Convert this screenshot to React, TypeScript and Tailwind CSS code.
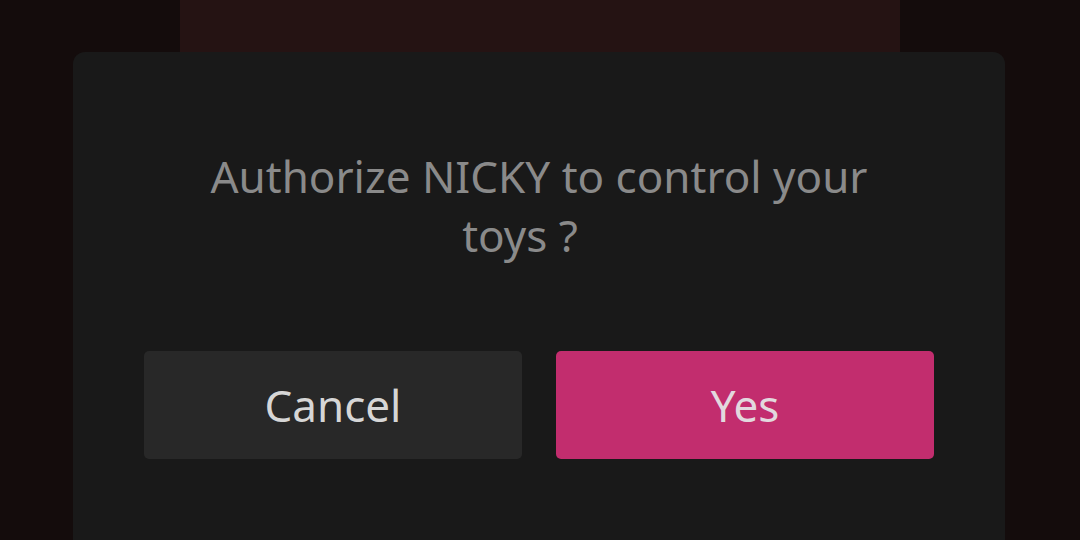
export default function App() {
  return (
    <div
      className="relative w-[1080px] h-[540px] overflow-hidden bg-[#140c0c] flex justify-center"
      style={{ fontFamily: '"Noto Sans", "Open Sans", sans-serif' }}
    >
      <div className="w-[720px] h-full bg-[#251313]" />
      <div className="absolute inset-0">
        <div className="absolute left-[73px] top-[52px] w-[932px] h-[520px] rounded-[12px] bg-[#191919] px-[71px] flex flex-col">
          <p className="mt-[95px] text-center text-[44px] leading-[59px] text-[#8a8a8a]">
            Authorize NICKY to control your
            <br />
            <span className="inline-block pr-[38px]">toys ?</span>
          </p>
          <div className="mt-[86px] flex gap-[34px]">
            <button className="w-[378px] h-[108px] rounded-[5px] bg-[#282828] text-[#d6d6d6] text-[44px]">
              Cancel
            </button>
            <button className="w-[378px] h-[108px] rounded-[5px] bg-[#c22d6e] text-[#e2d8de] text-[44px]">
              Yes
            </button>
          </div>
        </div>
      </div>
    </div>
  );
}
